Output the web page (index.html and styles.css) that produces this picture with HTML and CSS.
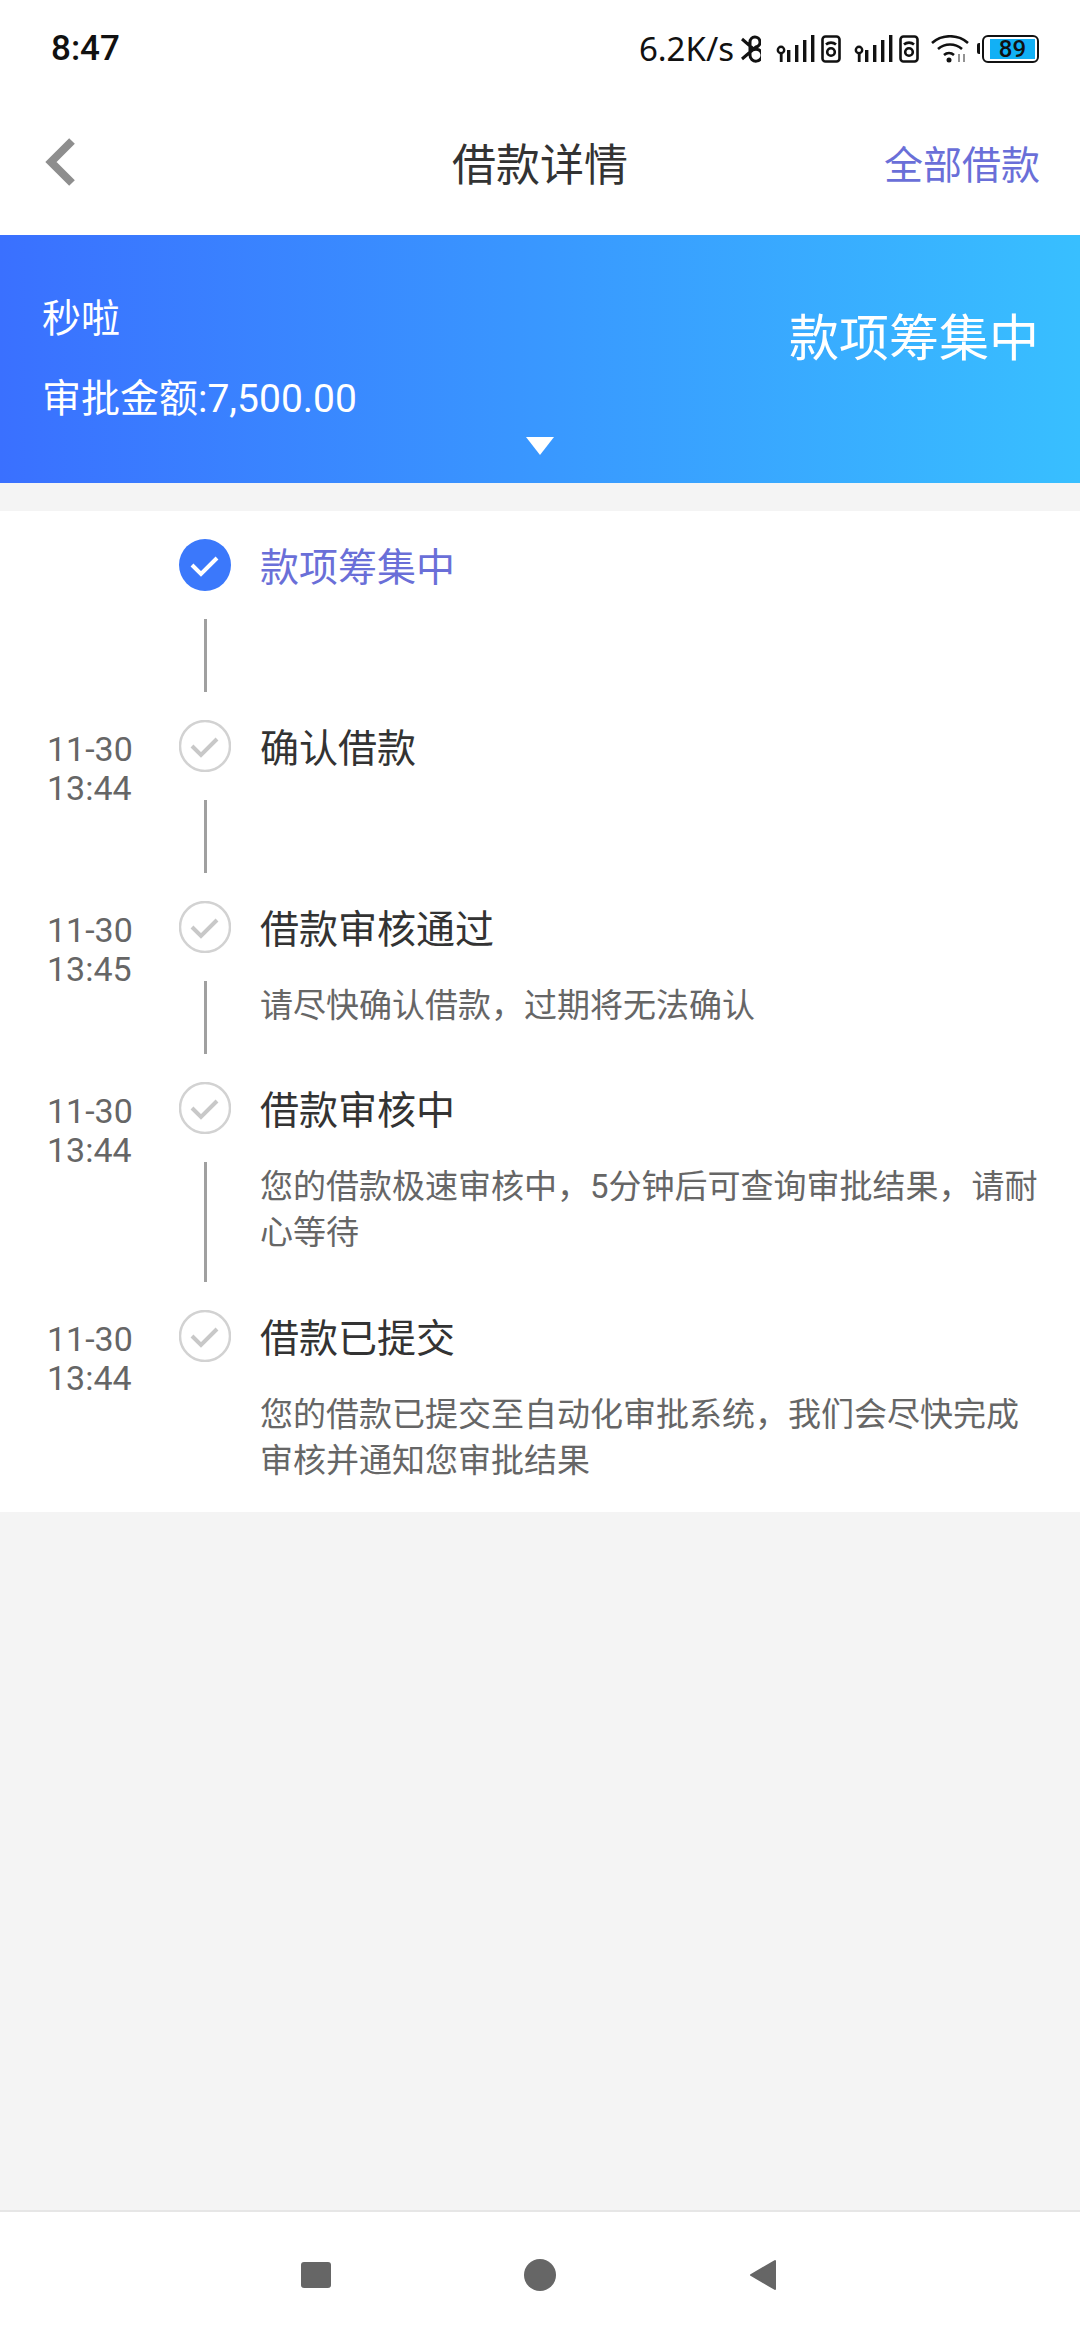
FILE: index.html
```html
<!DOCTYPE html>
<html lang="zh">
<head>
<meta charset="utf-8">
<title>借款详情</title>
<link rel="stylesheet" href="styles.css">
</head>
<body>
<div class="page">
  <div class="status">
    <span class="clock">8:47</span>
    <div class="status-right">
      <span class="speed">6.2K/s</span>
      <svg class="bt" width="20" height="28" viewBox="0 0 20 28" fill="none" stroke="#111" stroke-width="3"><path d="M1 4l12 10.500a6 6 0 1 1-4 5.500V7a5 5 0 1 1 6 5L1 24"/></svg>
      <svg class="sig" width="40" height="28" viewBox="0 0 40 28" fill="#111"><circle cx="5" cy="15" r="3.2" fill="none" stroke="#111" stroke-width="2.4"/><rect x="3.800" y="18" width="2.800" height="9"/><rect x="11" y="15" width="3.400" height="12"/><rect x="19" y="10" width="3.400" height="17"/><rect x="27" y="5" width="3.400" height="22" /><rect x="35" y="0" width="3.400" height="27"/></svg>
      <svg class="sim" width="20" height="28" viewBox="0 0 20 28" fill="none" stroke="#111" stroke-width="2.6"><rect x="1.500" y="1.500" width="17" height="25" rx="3"/><circle cx="10" cy="17" r="3.800"/><path d="M5 9.500a7.500 7.500 0 0 1 10 0"/></svg>
      <svg class="sig sig2" width="40" height="28" viewBox="0 0 40 28" fill="#111"><circle cx="5" cy="15" r="3.2" fill="none" stroke="#111" stroke-width="2.4"/><rect x="3.800" y="18" width="2.800" height="9"/><rect x="11" y="15" width="3.400" height="12"/><rect x="19" y="10" width="3.400" height="17"/><rect x="27" y="5" width="3.400" height="22"/><rect x="35" y="0" width="3.400" height="27"/></svg>
      <svg class="sim" width="20" height="28" viewBox="0 0 20 28" fill="none" stroke="#111" stroke-width="2.6"><rect x="1.500" y="1.500" width="17" height="25" rx="3"/><circle cx="10" cy="17" r="3.800"/><path d="M5 9.500a7.500 7.500 0 0 1 10 0"/></svg>
      <svg class="wifi" width="38" height="28" viewBox="0 0 38 28" fill="none" stroke="#111" stroke-width="2.600"><path d="M1 8c10-9 26-9 36 0M7 14c7-6 17-6 24 0M13 20c3-2.600 7-2.600 10 0"/><circle cx="18" cy="25" r="2.500" fill="#111" stroke="none"/><path d="M28 19v8M33 19v8" stroke="#888" stroke-width="1.800"/></svg>
      <div class="battery"><span class="batt-fill">89</span></div>
    </div>
  </div>

  <div class="nav">
    <svg class="back" width="32" height="48" viewBox="0 0 32 48" fill="none" stroke="#8e8e8e" stroke-width="8"><path d="M27 3L6 24l21 21"/></svg>
    <h1 class="nav-title">借款详情</h1>
    <span class="nav-link">全部借款</span>
  </div>

  <div class="banner">
    <div class="banner-left">
      <div class="banner-name">秒啦</div>
      <div class="banner-amount">审批金额:7,500.00</div>
    </div>
    <div class="banner-state">款项筹集中</div>
    <span class="banner-caret"></span>
  </div>

  <div class="timeline">
    <div class="step tall">
      <div class="time"></div>
      <div class="rail">
        <svg class="dot" width="52" height="52" viewBox="0 0 52 52"><circle cx="26" cy="26" r="26" fill="#3b78fb"/><path d="M13 26l9 9 16-16" fill="none" stroke="#fff" stroke-width="4"/></svg>
        <span class="line"></span>
      </div>
      <div class="body"><div class="step-title current">款项筹集中</div></div>
    </div>
    <div class="step tall">
      <div class="time">11-30<br>13:44</div>
      <div class="rail">
        <svg class="dot" width="52" height="52" viewBox="0 0 52 52"><circle cx="26" cy="26" r="25" fill="#fff" stroke="#d2d2d2" stroke-width="2.500"/><path d="M13 26l9 9 16-16" fill="none" stroke="#c8c8c8" stroke-width="4"/></svg>
        <span class="line"></span>
      </div>
      <div class="body"><div class="step-title">确认借款</div></div>
    </div>
    <div class="step tall">
      <div class="time">11-30<br>13:45</div>
      <div class="rail">
        <svg class="dot" width="52" height="52" viewBox="0 0 52 52"><circle cx="26" cy="26" r="25" fill="#fff" stroke="#d2d2d2" stroke-width="2.500"/><path d="M13 26l9 9 16-16" fill="none" stroke="#c8c8c8" stroke-width="4"/></svg>
        <span class="line"></span>
      </div>
      <div class="body">
        <div class="step-title">借款审核通过</div>
        <p class="step-note">请尽快确认借款，过期将无法确认</p>
      </div>
    </div>
    <div class="step long">
      <div class="time">11-30<br>13:44</div>
      <div class="rail">
        <svg class="dot" width="52" height="52" viewBox="0 0 52 52"><circle cx="26" cy="26" r="25" fill="#fff" stroke="#d2d2d2" stroke-width="2.500"/><path d="M13 26l9 9 16-16" fill="none" stroke="#c8c8c8" stroke-width="4"/></svg>
        <span class="line"></span>
      </div>
      <div class="body">
        <div class="step-title">借款审核中</div>
        <p class="step-note">您的借款极速审核中，5分钟后可查询审批结果，请耐心等待</p>
      </div>
    </div>
    <div class="step">
      <div class="time">11-30<br>13:44</div>
      <div class="rail">
        <svg class="dot" width="52" height="52" viewBox="0 0 52 52"><circle cx="26" cy="26" r="25" fill="#fff" stroke="#d2d2d2" stroke-width="2.500"/><path d="M13 26l9 9 16-16" fill="none" stroke="#c8c8c8" stroke-width="4"/></svg>
      </div>
      <div class="body">
        <div class="step-title">借款已提交</div>
        <p class="step-note">您的借款已提交至自动化审批系统，我们会尽快完成审核并通知您审批结果</p>
      </div>
    </div>
  </div>

  <div class="spacer"></div>

  <div class="sysnav">
    <span class="sys-square"></span>
    <span class="sys-circle"></span>
    <svg width="28" height="32" viewBox="0 0 28 32"><path d="M26 2v28L2 16z" fill="#666" stroke="#666" stroke-width="2" stroke-linejoin="round"/></svg>
  </div>
</div>
</body>
</html>
```
FILE: styles.css
```css
* { box-sizing: border-box; }
html, body { margin: 0; padding: 0; }
body {
  font-family: Roboto, "Noto Sans CJK SC", sans-serif;
  background: #f4f4f4;
  color: #333;
}
.page {
  width: 1080px;
  height: 2340px;
  display: flex;
  flex-direction: column;
}
.status {
  height: 80px;
  background: #fff;
  padding: 17px 41px 0 51px;
  display: flex;
  align-items: center;
  justify-content: space-between;
  color: #111;
}
.clock { font-size: 35px; font-weight: 500; }
.status-right { display: flex; align-items: center; }
.speed { font-size: 33px; font-family: "Noto Sans", sans-serif; margin-right: 7px; }
.bt { margin-right: 15px; }
.sim { margin-left: 5px; }
.sig2 { margin-left: 13px; }
.wifi { margin-left: 12px; }
.battery {
  margin-left: 13px;
  width: 57px;
  height: 28px;
  border: 2.5px solid #111;
  border-radius: 6px;
  padding: 2px 2px 2px 6px;
  display: flex;
  position: relative;
}
.battery::before {
  content: "";
  position: absolute;
  left: -7px;
  top: 6px;
  width: 3px;
  height: 11px;
  background: #111;
  border-radius: 2px 0 0 2px;
}
.batt-fill {
  flex: 1;
  background: #12b0f5;
  font-size: 24px;
  line-height: 20px;
  font-weight: 500;
  text-align: center;
  color: #111;
}
.nav {
  height: 155px;
  background: #fff;
  padding: 8px 40px 0 45px;
  display: flex;
  align-items: center;
  justify-content: space-between;
  position: relative;
}
.nav-title {
  position: absolute;
  left: 0;
  right: 0;
  margin: 0;
  text-align: center;
  font-size: 44px;
  font-weight: 400;
  color: #333;
}
.nav-link { font-size: 39px; color: #6a6fd8; position: relative; }
.banner {
  height: 248px;
  background: linear-gradient(90deg, #3a70ff, #38bfff);
  color: #fff;
  padding: 0 41px 0 42px;
  display: flex;
  align-items: center;
  justify-content: space-between;
  position: relative;
}
.banner-left { display: flex; flex-direction: column; gap: 30px; margin-top: 0; }
.banner-name, .banner-amount { font-size: 39px; line-height: 50px; }
.banner-state { font-size: 50px; margin-top: -50px; }
.banner-caret {
  position: absolute;
  left: 526px;
  top: 202px;
  width: 0;
  height: 0;
  border-left: 14px solid transparent;
  border-right: 14px solid transparent;
  border-top: 18px solid #fff;
}
.timeline {
  margin-top: 28px;
  background: #fff;
  padding: 28px 30px 0 0;
}
.step {
  display: grid;
  grid-template-columns: 179px 52px 1fr;
}
.step.tall { min-height: 181px; }
.step.long { min-height: 228px; }
.time {
  padding: 10px 0 0 47px;
  font-size: 34px;
  line-height: 39px;
  color: #666;
}
.rail {
  display: flex;
  flex-direction: column;
  align-items: center;
}
.dot { flex: none; }
.line {
  flex: 1;
  width: 3px;
  background: #a0a0a0;
  margin: 28px 0;
}
.body { padding: 3px 0 28px 29px; }
.step-title {
  font-size: 39px;
  line-height: 52px;
  color: #333;
}
.step-title.current { color: #6a6fd8; }
.step-note {
  margin: 27px 0 0;
  font-size: 33px;
  line-height: 46px;
  color: #666;
}
.spacer { flex: 1; }
.sysnav {
  height: 130px;
  background: #fff;
  border-top: 2px solid #e6e6e6;
  padding: 0 303px 2px 301px;
  display: flex;
  align-items: center;
  justify-content: space-between;
}
.sys-square { width: 30px; height: 26px; background: #666; border-radius: 3px; }
.sys-circle { width: 32px; height: 32px; background: #666; border-radius: 50%; }
```
